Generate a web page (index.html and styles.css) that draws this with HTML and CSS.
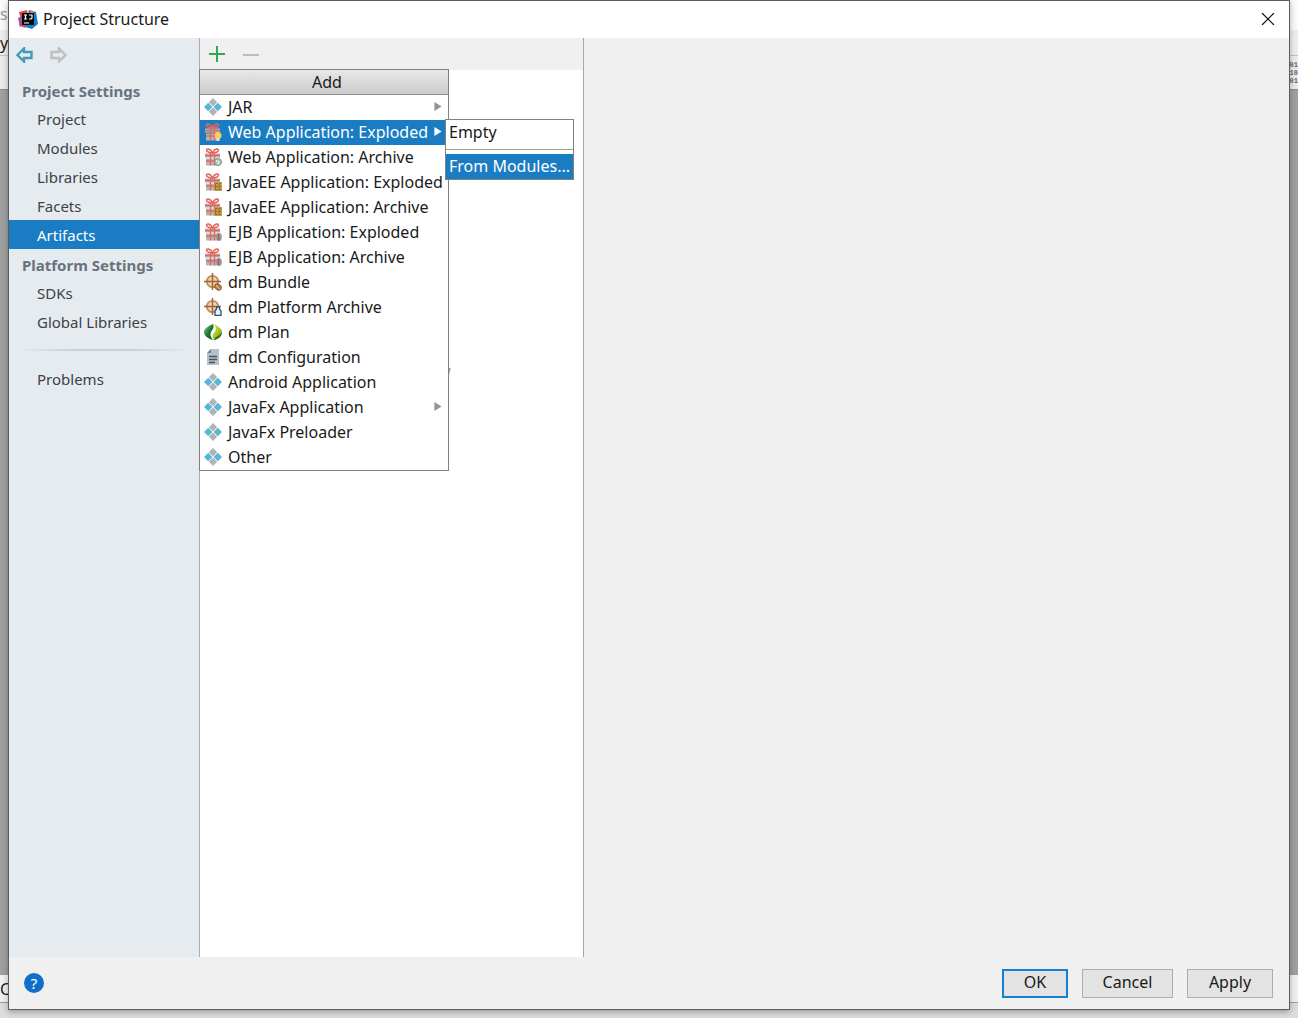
FILE: index.html
```
<!DOCTYPE html>
<html lang="en">
<head>
    <meta charset="UTF-8">
    <meta name="viewport" content="width=device-width, initial-scale=1.0">
    <title>Project Structure</title>
    <link rel="stylesheet" href="styles.css">
</head>
<body>

    <!-- Icon set -->
    <svg class="sprite" aria-hidden="true">
        <defs>
            <linearGradient id="leaf-dark" x1="0" y1="0" x2="1" y2="1">
                <stop offset="0" stop-color="#8fd08c"/>
                <stop offset=".5" stop-color="#1f7a35"/>
                <stop offset="1" stop-color="#083f1c"/>
            </linearGradient>
            <linearGradient id="leaf-light" x1="0" y1="0" x2="1" y2="1">
                <stop offset="0" stop-color="#e6ec3c"/>
                <stop offset="1" stop-color="#6f9c1c"/>
            </linearGradient>
        </defs>
        <symbol id="artifact" viewBox="0 0 18 18">
            <path d="M9 0l4.200 4.200L9 8.400 4.800 4.200z" fill="#b0b3b7"/>
            <path d="M9 9.600l4.200 4.200L9 18l-4.200-4.200z" fill="#b0b3b7"/>
            <path d="M4.200 4.800L8.400 9l-4.200 4.200L0 9z" fill="#55b6d6"/>
            <path d="M13.800 4.800L18 9l-4.200 4.200L9.600 9z" fill="#55b6d6"/>
        </symbol>
        <symbol id="gift" viewBox="0 0 18 18">
            <path d="M1 5.500h15v4H1zM2 10.500h13v7H2z" fill="#b3b5b7"/>
            <path d="M8.500 5C6 5 2.500 4 2.500 2.200s4-2 6 2.800c2-4.800 6-4.600 6-2.800S11 5 8.500 5z" fill="none" stroke="#e2675c" stroke-width="1.600"/>
            <path d="M6.500 5v12.500M10.500 5v12.500M1 7.500h15M2 13h13" stroke="#e2675c" stroke-width="1.300" fill="none"/>
        </symbol>
        <symbol id="gift-bulb" viewBox="0 0 18 18">
            <use href="#gift"/>
            <circle cx="14" cy="12.500" r="3.500" fill="#f5cf57"/>
            <path d="M12.500 15h3v3h-3z" fill="#d7e3ee"/>
        </symbol>
        <symbol id="gift-globe" viewBox="0 0 18 18">
            <use href="#gift"/>
            <circle cx="14" cy="14" r="3.500" fill="#a9cbb0" stroke="#7d8b8e"/>
            <path d="M12 12.500l3 1.500-1 2.500" fill="none" stroke="#f7f7f7"/>
        </symbol>
        <symbol id="gift-ee" viewBox="0 0 18 18">
            <use href="#gift"/>
            <path d="M10 9h8v9h-8z" fill="#c99c4b"/>
            <path d="M13.500 10.500h-2v6h2M11.500 13.500h2M17 10.500h-2v6h2M15 13.500h2" fill="none" stroke="#8f6828" stroke-width=".9"/>
        </symbol>
        <symbol id="gift-bean" viewBox="0 0 18 18">
            <use href="#gift"/>
            <ellipse cx="15" cy="14" rx="2.800" ry="4" fill="#a3938f"/>
            <path d="M14 11c2 2-1 4 1 6" fill="none" stroke="#6d6463"/>
        </symbol>
        <symbol id="target" viewBox="0 0 18 18">
            <circle cx="8.500" cy="8.500" r="5.700" fill="#f2d1ad" stroke="#c88d50" stroke-width="1.800"/>
            <path d="M8.500 0v17M0 8.500h17" stroke="#94663f" stroke-width="1.400"/>
        </symbol>
        <symbol id="dm-bundle" viewBox="0 0 18 18">
            <use href="#target"/>
            <ellipse cx="14" cy="14" rx="3.800" ry="2.900" fill="#b1773d" stroke="#7a4d24" stroke-width=".6" transform="rotate(35 14 14)"/>
            <path d="M12 12.500c2 0 1 3 4 3" fill="none" stroke="#f0d8b8"/>
        </symbol>
        <symbol id="dm-platform" viewBox="0 0 18 18">
            <use href="#target"/>
            <path d="M12.500 9h3v2l1.500 2v4.300h-6V13l1.500-2z" fill="#eef5fa" stroke="#25537c" stroke-width="1.300"/>
        </symbol>
        <symbol id="dm-plan" viewBox="0 0 20 18">
            <path d="M10 0C5 2 0 5 0 9c0 5 5 7 10 9-4-5-3-8-1-11 2-2 2-5 1-7z" fill="url(#leaf-dark)"/>
            <path d="M11 0c4 2 9 5 9 9s-4 8-9 9c-3-5-1-7 1-9s1-6-1-9z" fill="url(#leaf-light)"/>
            <path d="M20 9c0 5-4 8-9 9 2-5 6-4 9-9z" fill="#31711f"/>
        </symbol>
        <symbol id="dm-config" viewBox="0 0 18 18">
            <path d="M7 1h8v16H3V5z" fill="#b6c0c9"/>
            <path d="M7 1v4H3z" fill="#77838f"/>
            <path d="M5 8.500h8M5 11.500h8M5 14.500h6" stroke="#465460" stroke-width="1.400"/>
        </symbol>
        <symbol id="arrow" viewBox="0 0 8 10">
            <path d="M0 0l8 5-8 5z" fill="currentColor"/>
        </symbol>
    </svg>

    <!-- IDE window behind the dialog -->
    <div class="ide" aria-hidden="true">
        <div class="ide-title">s\</div>
        <div class="ide-menu">y</div>
        <div class="ide-toolbar"><span>01<br>10<br>01</span></div>
        <div class="ide-editor"></div>
        <div class="ide-tools">C</div>
        <div class="ide-status"></div>
    </div>

    <main class="dialog">
        <header class="titlebar">
            <svg class="logo" viewBox="0 0 20 20" aria-hidden="true">
                <path d="M1 3l8-2 2 9-4 9-6-3 2-5z" fill="#e8434f"/>
                <path d="M0 9l6-3 2 9-6 3z" fill="#a44f9c"/>
                <path d="M11 1l7 2 2 12-6 5-7-2z" fill="#167ed0"/>
                <path d="M12 1l4 1-2 5z" fill="#f08b46"/>
                <path d="M4 4h12v12H4z" fill="#080808"/>
                <path d="M6 6h3M7.500 6v4M6 10h3M11 6h3v3q0 1-2 1h-1M6 14h5" fill="none" stroke="#fff" stroke-width="1.200"/>
            </svg>
            <h1>Project Structure</h1>
            <button class="close" aria-label="Close">
                <svg viewBox="0 0 12 12"><path d="M0 0l12 12M12 0L0 12" stroke="#111" stroke-width="1.200"/></svg>
            </button>
        </header>

        <div class="content">
            <nav class="sidebar">
                <div class="history">
                    <button class="back" aria-label="Back">
                        <svg viewBox="0 0 17 16"><path d="M1.500 8L8 1.500V5h7.500v6H8v3.500z" fill="none" stroke="currentColor" stroke-width="2.400"/></svg>
                    </button>
                    <button class="forward" aria-label="Forward" disabled>
                        <svg viewBox="0 0 17 16"><path d="M15.500 8L9 1.500V5H1.500v6H9v3.500z" fill="none" stroke="currentColor" stroke-width="2.400"/></svg>
                    </button>
                </div>
                <h2>Project Settings</h2>
                <a href="#project">Project</a>
                <a href="#modules">Modules</a>
                <a href="#libraries">Libraries</a>
                <a href="#facets">Facets</a>
                <a href="#artifacts" class="selected">Artifacts</a>
                <h2>Platform Settings</h2>
                <a href="#sdks">SDKs</a>
                <a href="#global">Global Libraries</a>
                <hr>
                <a href="#problems">Problems</a>
            </nav>

            <section class="artifacts">
                <div class="toolbar">
                    <button class="add" aria-label="Add">
                        <svg viewBox="0 0 16 16"><path d="M8 0v16M0 8h16" stroke="currentColor" stroke-width="2"/></svg>
                    </button>
                    <button class="remove" aria-label="Remove" disabled>
                        <svg viewBox="0 0 16 16"><path d="M0 9h16" stroke="currentColor" stroke-width="2"/></svg>
                    </button>
                </div>
                <p class="empty">Nothing to show</p>

                <!-- Add menu -->
                <div class="menu">
                    <h3>Add</h3>
                    <button><svg class="icon"><use href="#artifact"/></svg>JAR<svg class="more"><use href="#arrow"/></svg></button>
                    <button class="selected"><svg class="icon"><use href="#gift-bulb"/></svg>Web Application: Exploded<svg class="more"><use href="#arrow"/></svg></button>
                    <button><svg class="icon"><use href="#gift-globe"/></svg>Web Application: Archive</button>
                    <button><svg class="icon"><use href="#gift-ee"/></svg>JavaEE Application: Exploded</button>
                    <button><svg class="icon"><use href="#gift-ee"/></svg>JavaEE Application: Archive</button>
                    <button><svg class="icon"><use href="#gift-bean"/></svg>EJB Application: Exploded</button>
                    <button><svg class="icon"><use href="#gift-bean"/></svg>EJB Application: Archive</button>
                    <button><svg class="icon"><use href="#dm-bundle"/></svg>dm Bundle</button>
                    <button><svg class="icon"><use href="#dm-platform"/></svg>dm Platform Archive</button>
                    <button><svg class="icon"><use href="#dm-plan"/></svg>dm Plan</button>
                    <button><svg class="icon"><use href="#dm-config"/></svg>dm Configuration</button>
                    <button><svg class="icon"><use href="#artifact"/></svg>Android Application</button>
                    <button><svg class="icon"><use href="#artifact"/></svg>JavaFx Application<svg class="more"><use href="#arrow"/></svg></button>
                    <button><svg class="icon"><use href="#artifact"/></svg>JavaFx Preloader</button>
                    <button><svg class="icon"><use href="#artifact"/></svg>Other</button>

                    <div class="submenu">
                        <button>Empty</button>
                        <hr>
                        <button class="selected">From Modules...</button>
                    </div>
                </div>
            </section>

            <section class="details"></section>
        </div>

        <footer class="actions">
            <button class="help" aria-label="Help">?</button>
            <button class="btn primary">OK</button>
            <button class="btn cancel">Cancel</button>
            <button class="btn apply">Apply</button>
        </footer>
    </main>

</body>
</html>
```
FILE: styles.css
```
* {
    box-sizing: border-box;
}

body {
    margin: 0;
    height: 100vh;
    display: flex;
    overflow: hidden;
    position: relative;
    font-family: "Noto Sans", "Open Sans", sans-serif;
    font-size: 16px;
    line-height: 20px;
    color: #1a1a1a;
}

button {
    font: inherit;
    color: inherit;
    background: none;
    border: none;
    padding: 0;
}

h1, h2, h3, p {
    margin: 0;
    font-size: 16px;
    font-weight: normal;
}

svg {
    display: block;
    flex-shrink: 0;
}

.sprite {
    position: absolute;
    width: 0;
    height: 0;
}

/* IDE window in the background */
.ide {
    position: absolute;
    inset: 0;
    display: flex;
    flex-direction: column;
    background-color: #dcdcdc;
}

.ide-title {
    height: 30px;
    padding-top: 4px;
    background-color: #fafafa;
    color: #999;
}

.ide-menu {
    height: 26px;
    padding-top: 3px;
    background-color: #ededed;
    border-bottom: 1px solid #c4c4c4;
}

.ide-toolbar {
    height: 34px;
    display: flex;
    justify-content: flex-end;
    align-items: center;
    background-color: #ebebeb;
    border-bottom: 1px solid #8c8c8c;
    font-family: "Liberation Mono", monospace;
    font-size: 7px;
    font-weight: bold;
    line-height: 8px;
    color: #666;
}

.ide-editor {
    flex: 1;
    background-color: #a0a0a0;
}

.ide-tools {
    height: 28px;
    padding-top: 4px;
    background-color: #f0f0f0;
    border-bottom: 1px solid #9a9a9a;
}

.ide-status {
    height: 15px;
}

/* Dialog */
.dialog {
    flex: 1;
    margin: 0 8px 8px;
    position: relative;
    display: flex;
    flex-direction: column;
    background-color: #f0f0f0;
    border: 1px solid #5c5c5c;
    box-shadow: 0 2px 6px rgba(0, 0, 0, 0.3);
}

.titlebar {
    height: 37px;
    display: flex;
    align-items: center;
    gap: 5px;
    padding: 0 14px 2px 9px;
    background-color: white;
}

.titlebar h1 {
    flex: 1;
}

.logo {
    width: 20px;
    height: 20px;
}

.close svg {
    width: 14px;
    height: 12px;
}

.content {
    flex: 1;
    display: flex;
}

.sidebar {
    width: 191px;
    background-color: #e6ebf0;
    border-right: 1px solid #a8acb0;
    font-size: 15px;
}

.history {
    height: 33px;
    display: flex;
    align-items: center;
    gap: 17px;
    padding-left: 7px;
    margin-bottom: 4px;
}

.history svg {
    width: 17px;
    height: 16px;
}

.back {
    color: #4399b8;
}

.forward {
    color: #bdbfc1;
}

.sidebar h2 {
    height: 29px;
    padding: 6px 13px;
    font-size: 15px;
    font-weight: bold;
    color: #68737f;
}

.sidebar a {
    display: block;
    height: 29px;
    padding: 5px 28px;
    color: #3c4248;
    text-decoration: none;
}

.sidebar a.selected {
    background-color: #1a7dc4;
    color: white;
}

.sidebar hr {
    height: 2px;
    margin: 13px 10px;
    border: none;
    background: linear-gradient(to right, transparent, #ccd1d5 30%, #ccd1d5 70%, transparent);
}

/* Artifact list */
.artifacts {
    width: 384px;
    position: relative;
    background-color: white;
    border-right: 1px solid #a8a8a8;
}

.toolbar {
    height: 32px;
    display: flex;
    align-items: center;
    gap: 18px;
    padding-left: 9px;
    background-color: #f0f0f0;
}

.toolbar svg {
    width: 16px;
    height: 16px;
}

.add {
    color: #2faa50;
}

.remove {
    color: #bcbcbc;
}

.empty {
    margin-top: 291px;
    padding-right: 6px;
    text-align: center;
    color: #999;
}

.details {
    flex: 1;
}

/* Popup menus */
.menu {
    position: absolute;
    top: 31px;
    left: -1px;
    width: 250px;
    background-color: white;
    border: 1px solid #808080;
}

.menu h3 {
    height: 25px;
    padding: 2px 6px 2px 12px;
    text-align: center;
    background: linear-gradient(#e8e8e8, #cccccc);
    border-bottom: 1px solid #8c8c8c;
}

.menu button {
    width: 100%;
    height: 25px;
    display: flex;
    align-items: center;
    gap: 6px;
    padding: 0 6px 2px 4px;
    text-align: left;
    white-space: nowrap;
}

.menu .selected {
    background-color: #1a7dc4;
    color: white;
}

.icon {
    width: 18px;
    height: 18px;
}

.more {
    width: 8px;
    height: 9px;
    margin-left: auto;
    color: #949494;
}

.selected .more {
    color: white;
}

.submenu {
    position: absolute;
    top: 49px;
    left: 245px;
    width: 129px;
    background-color: white;
    border: 1px solid #808080;
}

.submenu button {
    padding: 0 3px 2px;
}

.submenu hr {
    margin: 4px 0;
    border: none;
    border-top: 1px solid #a0a0a0;
}

/* Bottom buttons */
.actions {
    height: 52px;
    display: flex;
    align-items: center;
    gap: 14px;
    padding: 0 16px 0 15px;
}

.help {
    width: 20px;
    height: 20px;
    margin-right: auto;
    border-radius: 50%;
    background-color: #0f6fc9;
    color: white;
    font-size: 15px;
}

.btn {
    height: 29px;
    padding-bottom: 2px;
    background-color: #e3e3e3;
    border: 1px solid #adadad;
}

.primary {
    width: 66px;
    border: 2px solid #1580d0;
}

.cancel {
    width: 91px;
}

.apply {
    width: 86px;
}
```
